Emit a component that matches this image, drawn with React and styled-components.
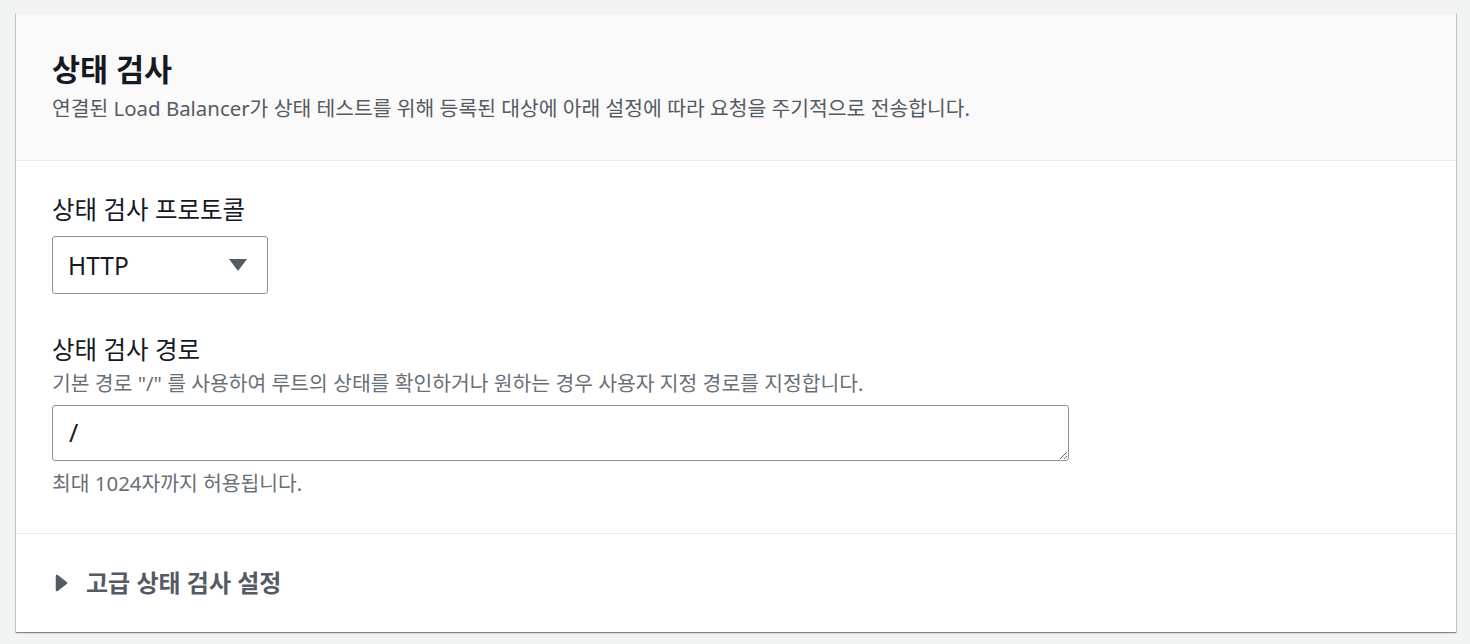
import React from 'react';
import styled, {createGlobalStyle} from 'styled-components';

const Global = createGlobalStyle`
  html, body {
    margin: 0;
    padding: 0;
    background: #f2f3f3;
    font-family: "Noto Sans", "Noto Sans CJK KR", sans-serif;
    color: #16191f;
  }
`;

const Page = styled.div`
  padding: 13px 14px 11px 16px;
`;

const Card = styled.section`
  background: white;
  box-shadow: 0 1px 1px 0 rgba(0, 28, 36, 0.3), 1px 1px 1px 0 rgba(0, 28, 36, 0.15), -1px 1px 1px 0 rgba(0, 28, 36, 0.15);
  border-top: 1px solid #eaeded;
`;

const Header = styled.div`
  background: #fafafa;
  border-bottom: 1px solid #eaeded;
  padding: 35px 36px 38px 36px;
`;

const Title = styled.h2`
  margin: 0;
  font-size: 30.5px;
  line-height: 40px;
  font-weight: 700;
  color: #16191f;
`;

const Description = styled.p`
  margin: 5px 0 0;
  font-size: 20.4px;
  line-height: 28px;
  color: #545b64;
`;

const Body = styled.div`
  padding: 33px 36px 36px;
  display: flex;
  flex-direction: column;
  gap: 40px;
  border-bottom: 1px solid #eaeded;
`;

const Field = styled.div`
  display: flex;
  flex-direction: column;
`;

const Label = styled.label`
  font-size: 24.5px;
  line-height: 32px;
  color: #16191f;
`;

const Hint = styled.div`
  font-size: 20.4px;
  line-height: 28px;
  color: #687078;
  margin-top: ${p => p.$top || 0}px;
`;

const Select = styled.div`
  margin-top: 10px;
  width: 216px;
  height: 58px;
  box-sizing: border-box;
  border: 1px solid #879596;
  border-radius: 3px;
  display: flex;
  align-items: center;
  justify-content: space-between;
  padding: 0 20px 0 15px;
  font-size: 24.5px;
  color: #16191f;
`;

const Caret = styled.span`
  width: 0;
  height: 0;
  border-left: 9px solid transparent;
  border-right: 9px solid transparent;
  border-top: 12px solid #545b64;
`;

const TextArea = styled.textarea`
  margin-top: 8px;
  width: 1017px;
  height: 56px;
  box-sizing: border-box;
  border: 1px solid #879596;
  border-radius: 3px;
  padding: 9px 16px;
  font-family: "Noto Sans", "Noto Sans CJK KR", sans-serif;
  font-size: 25px;
  line-height: 34px;
  color: #16191f;
  background: white;
  outline: none;
`;

const Footer = styled.div`
  padding: 33px 36px 33px 39px;
  display: flex;
  align-items: center;
  gap: 18px;
`;

const Arrow = styled.svg`
  width: 13px;
  height: 18px;
  flex: none;
`;

const ExpandTitle = styled.span`
  font-size: 24px;
  line-height: 32px;
  font-weight: 700;
  color: #545b64;
`;

export default function App() {
  return (
    <Page>
      <Global/>
      <Card>
        <Header>
          <Title>상태 검사</Title>
          <Description>연결된 Load Balancer가 상태 테스트를 위해 등록된 대상에 아래 설정에 따라 요청을 주기적으로 전송합니다.</Description>
        </Header>
        <Body>
          <Field>
            <Label>상태 검사 프로토콜</Label>
            <Select>
              <span>HTTP</span>
              <Caret/>
            </Select>
          </Field>
          <Field>
            <Label>상태 검사 경로</Label>
            <Hint $top={3}>기본 경로 "/" 를 사용하여 루트의 상태를 확인하거나 원하는 경우 사용자 지정 경로를 지정합니다.</Hint>
            <TextArea defaultValue="/"/>
            <Hint $top={8}>최대 1024자까지 허용됩니다.</Hint>
          </Field>
        </Body>
        <Footer>
          <Arrow viewBox="0 0 13 18">
            <path d="M2 2 L11 9 L2 16 Z" fill="#545b64" stroke="#545b64" strokeWidth="2.5" strokeLinejoin="round"/>
          </Arrow>
          <ExpandTitle>고급 상태 검사 설정</ExpandTitle>
        </Footer>
      </Card>
    </Page>
  );
}
